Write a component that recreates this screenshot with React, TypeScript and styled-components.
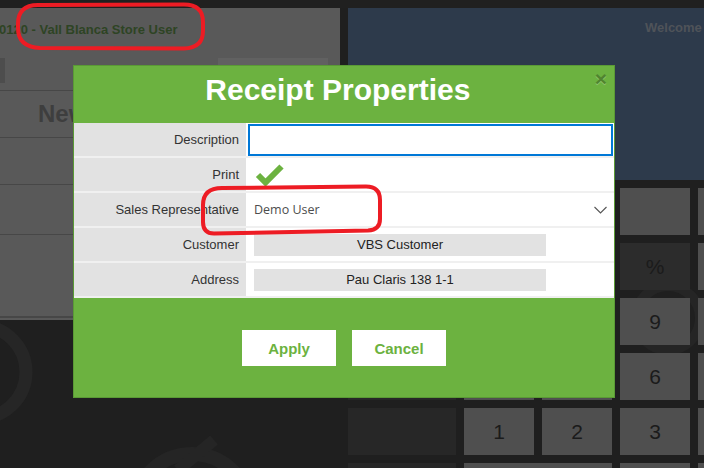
import React from "react";
import styled, { createGlobalStyle, css } from "styled-components";

const GlobalStyle = createGlobalStyle`
  html, body { margin: 0; padding: 0; background: #1f1f1f; }
  body {
    width: 704px;
    height: 468px;
    overflow: hidden;
    font-family: "Liberation Sans", Arial, sans-serif;
  }
  * { box-sizing: border-box; }
`;

const Page = styled.div`
  position: relative;
  width: 704px;
  height: 468px;
  overflow: hidden;
  background: #1f1f1f;
  display: flex;
  flex-direction: column;
`;

const Watermark = styled.svg`
  position: absolute;
  left: 0;
  top: 0;
  width: 704px;
  height: 468px;
  pointer-events: none;
`;

const TopBar = styled.div`
  position: relative;
  height: 8px;
  flex: none;
  background: #202020;
`;

const Main = styled.div`
  position: relative;
  flex: 1;
  display: flex;
  gap: 8px;
  min-height: 0;
`;

const LeftColumn = styled.div`
  width: 340px;
  flex: none;
  display: flex;
  flex-direction: column;
`;

const LeftPanel = styled.div`
  height: 312px;
  background: #595959;
  display: flex;
  flex-direction: column;
`;

const StoreTitle = styled.div`
  height: 42px;
  display: flex;
  align-items: center;
  font-weight: bold;
  font-size: 13px;
  color: #2e4424;
  white-space: nowrap;
  text-indent: -1px;
`;

const ToolRow = styled.div`
  height: 41px;
  display: flex;
  align-items: center;
  padding-right: 12px;
  border-bottom: 1px solid #474747;
`;

const EdgeTab = styled.div`
  width: 5px;
  height: 25px;
  background: #4d4d4d;
`;

const HeldButton = styled.div`
  margin-left: auto;
  width: 110px;
  height: 25px;
  background: #616161;
  color: #333;
  font-size: 13px;
  text-align: center;
  line-height: 23px;
`;

const ListRow = styled.div<{ $h: number }>`
  height: ${(p) => p.$h}px;
  display: flex;
  align-items: center;
  padding-left: 38px;
  border-bottom: 1px solid #474747;
`;

const BigLabel = styled.div`
  font-weight: bold;
  font-size: 24px;
  color: #3e3e3e;
  white-space: nowrap;
`;

const Filler = styled.div`
  flex: 1;
`;

const BottomEdge = styled.div`
  height: 4px;
  border-top: 2px solid #474747;
`;

const RightColumn = styled.div`
  flex: 1;
  min-width: 0;
  display: flex;
  flex-direction: column;
`;

const BluePanel = styled.div`
  height: 172px;
  flex: none;
  background: #2d3a4b;
  display: flex;
  align-items: flex-start;
  padding-top: 12px;
`;

const Welcome = styled.div`
  margin-left: auto;
  width: 59px;
  white-space: nowrap;
  font-weight: bold;
  font-size: 13px;
  line-height: 15px;
  color: #4f5359;
`;

const Keypad = styled.div`
  display: grid;
  grid-template-columns: 108px repeat(4, 70px);
  grid-auto-rows: 47px;
  column-gap: 8px;
  row-gap: 8px;
  padding-top: 8px;
  width: max-content;
`;

const Key = styled.div<{ $tone?: "side" | "dim"; $span?: number }>`
  display: flex;
  align-items: center;
  justify-content: center;
  font-size: 21px;
  color: #1b1b1b;
  background: #4f4f4f;
  ${(p) => p.$span && css`grid-column: span ${p.$span};`}
  ${(p) =>
    p.$tone === "side" &&
    css`
      background: #272727;
    `}
  ${(p) =>
    p.$tone === "dim" &&
    css`
      background: #2c2c2c;
    `}
`;

/* ---------- modal ---------- */

const Modal = styled.div`
  position: absolute;
  left: 73px;
  top: 65px;
  width: 542px;
  background: #6cb240;
  border: 1px solid #5a9a35;
  z-index: 5;
`;

const ModalHeader = styled.div`
  height: 57px;
  display: flex;
  align-items: flex-start;
  padding: 0 7px;
`;

const ModalTitle = styled.h1`
  flex: 1;
  margin: 0;
  text-align: center;
  font-family: "Liberation Sans", Arial, sans-serif;
  font-weight: bold;
  font-size: 30px;
  line-height: 48px;
  color: #fff;
`;

const CloseButton = styled.button`
  margin-top: 2px;
  padding: 0;
  border: 0;
  background: none;
  font-family: "Liberation Sans", Arial, sans-serif;
  font-weight: bold;
  font-size: 21px;
  line-height: 21px;
  color: #000;
  opacity: 0.25;
  text-shadow: 0 1px 0 #fff;
`;

const PropRow = styled.div`
  display: grid;
  grid-template-columns: 172px 1fr;
  column-gap: 2px;
  height: 35px;
  background: #fff;
  border-bottom: 2px solid #f0f0f0;
`;

const Label = styled.div`
  display: flex;
  align-items: center;
  justify-content: flex-end;
  padding-right: 7px;
  background: #e2e2e2;
  font-size: 13px;
  color: #333;
  white-space: nowrap;
`;

const Value = styled.div`
  display: flex;
  align-items: center;
  min-width: 0;
`;

const TextInput = styled.input`
  flex: 1;
  align-self: flex-start;
  height: 32px;
  margin: 1px 1px 0 0;
  padding: 0 6px;
  border: 2px solid #0078d7;
  outline: none;
  background: #fff;
  font-family: "Liberation Sans", Arial, sans-serif;
  font-size: 13px;
`;

const CheckMark = styled.svg`
  margin-left: 7px;
  margin-top: 1px;
`;

const SelectBox = styled.div`
  flex: 1;
  align-self: stretch;
  display: flex;
  align-items: center;
  justify-content: space-between;
  padding: 0 7px 0 6px;
  font-family: "Open Sans", "Noto Sans", sans-serif;
  font-size: 12.5px;
  color: #4d4d4d;
`;

const ReadOnlyBox = styled.div`
  width: 292px;
  height: 22px;
  margin-left: 6px;
  background: #e2e2e2;
  text-align: center;
  line-height: 22px;
  font-size: 13px;
  color: #222;
`;

const ModalFooter = styled.div`
  display: flex;
  justify-content: center;
  gap: 16px;
  padding: 32px 0 31px;
`;

const FooterButton = styled.button`
  width: 94px;
  height: 36px;
  border: 0;
  padding: 0;
  background: #fff;
  font-family: "Liberation Sans", Arial, sans-serif;
  font-weight: bold;
  font-size: 15px;
  color: #6cb240;
`;

const Annotations = styled.svg`
  position: absolute;
  left: 0;
  top: 0;
  width: 704px;
  height: 468px;
  pointer-events: none;
  z-index: 10;
`;

const keyRows: { label: string; tone?: "side" | "dim"; span?: number }[][] = [
  [{ label: "", tone: "side" }, { label: "C" }, { label: "←" }, { label: "" }, { label: "" }],
  [{ label: "", tone: "side" }, { label: "+" }, { label: "−" }, { label: "%", tone: "dim" }, { label: "" }],
  [{ label: "", tone: "side" }, { label: "7" }, { label: "8" }, { label: "9" }, { label: "" }],
  [{ label: "", tone: "side" }, { label: "4" }, { label: "5" }, { label: "6" }, { label: "" }],
  [{ label: "", tone: "side" }, { label: "1" }, { label: "2" }, { label: "3" }, { label: "" }],
  [{ label: "", tone: "side" }, { label: "", span: 2 }, { label: "" }, { label: "" }],
];

export default function App() {
  return (
    <>
      <GlobalStyle />
      <Page>
        <Watermark viewBox="0 0 704 468">
          <circle cx="-20" cy="372" r="46" fill="none" stroke="#262626" strokeWidth="13" />
          <circle cx="192" cy="512" r="58" fill="none" stroke="#252525" strokeWidth="14" />
          <line x1="178" y1="470" x2="214" y2="440" stroke="#252525" strokeWidth="12" />
          <circle cx="668" cy="318" r="32" fill="none" stroke="#252525" strokeWidth="10" />
        </Watermark>

        <TopBar />
        <Main>
          <LeftColumn>
            <LeftPanel>
              <StoreTitle>0120 - Vall Blanca Store User</StoreTitle>
              <ToolRow>
                <EdgeTab />
                <HeldButton>Held tickets</HeldButton>
              </ToolRow>
              <ListRow $h={47}>
                <BigLabel>New Receipt</BigLabel>
              </ListRow>
              <ListRow $h={47} />
              <ListRow $h={50} />
              <Filler />
              <BottomEdge />
            </LeftPanel>
          </LeftColumn>

          <RightColumn>
            <BluePanel>
              <Welcome>Welcome</Welcome>
            </BluePanel>
            <Keypad>
              {keyRows.flat().map((k, i) => (
                <Key key={i} $tone={k.tone} $span={k.span}>
                  {k.label}
                </Key>
              ))}
            </Keypad>
          </RightColumn>
        </Main>

        <Modal>
          <ModalHeader>
            <ModalTitle>Receipt Properties</ModalTitle>
            <CloseButton>×</CloseButton>
          </ModalHeader>

          <PropRow>
            <Label>Description</Label>
            <Value>
              <TextInput type="text" defaultValue="" />
            </Value>
          </PropRow>
          <PropRow>
            <Label>Print</Label>
            <Value>
              <CheckMark width="30" height="26" viewBox="0 0 30 26">
                <polyline
                  points="3,13 10.5,20.5 26.5,4.5"
                  fill="none"
                  stroke="#6cb240"
                  strokeWidth="6"
                  strokeLinejoin="miter"
                />
              </CheckMark>
            </Value>
          </PropRow>
          <PropRow>
            <Label>Sales Representative</Label>
            <Value>
              <SelectBox>
                <span>Demo User</span>
                <svg width="13" height="8" viewBox="0 0 13 8">
                  <polyline points="0.5,1 6.5,7 12.5,1" fill="none" stroke="#555" strokeWidth="1.1" />
                </svg>
              </SelectBox>
            </Value>
          </PropRow>
          <PropRow>
            <Label>Customer</Label>
            <Value>
              <ReadOnlyBox>VBS Customer</ReadOnlyBox>
            </Value>
          </PropRow>
          <PropRow>
            <Label>Address</Label>
            <Value>
              <ReadOnlyBox>Pau Claris 138 1-1</ReadOnlyBox>
            </Value>
          </PropRow>

          <ModalFooter>
            <FooterButton>Apply</FooterButton>
            <FooterButton>Cancel</FooterButton>
          </ModalFooter>
        </Modal>

        <Annotations viewBox="0 0 704 468">
          <path
            d="M38,5 L184,4.5 Q203,4.5 203,22 L203,31 Q203,48 184,48.5 L40,48 Q18,47 18,28 L18,24 Q18,5 38,5 Z"
            fill="none"
            stroke="#ed1c24"
            strokeWidth="4"
          />
          <path
            d="M222,188 L366,186.5 Q380,186.5 380,200 L380,219 Q380,230 368,230.5 L214,233.5 Q203,233.5 203,222 L203,205 Q203,188 222,188 Z"
            fill="none"
            stroke="#ed1c24"
            strokeWidth="4"
          />
        </Annotations>
      </Page>
    </>
  );
}
